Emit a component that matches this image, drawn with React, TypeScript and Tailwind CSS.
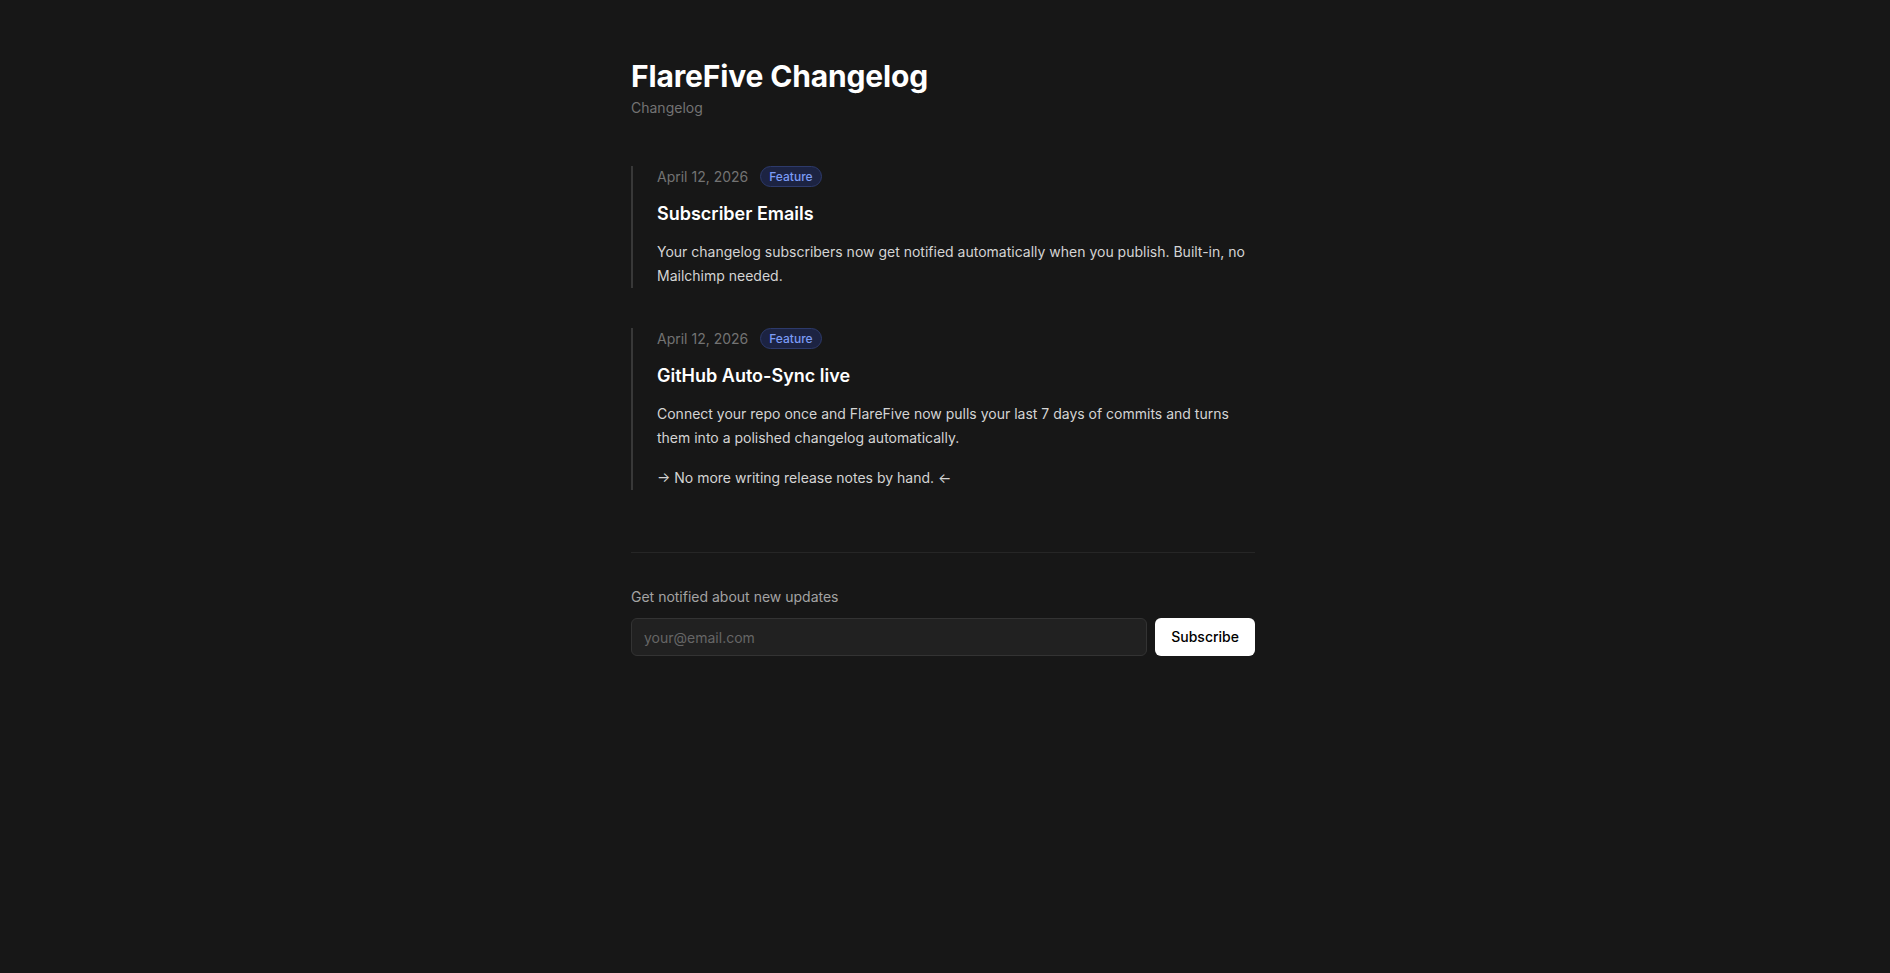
const entries = [
  {
    id: 'subscriber-emails',
    date: 'April 12, 2026',
    tag: 'Feature',
    title: 'Subscriber Emails',
    body: [
      'Your changelog subscribers now get notified automatically when you publish. Built-in, no Mailchimp needed.',
    ],
  },
  {
    id: 'github-auto-sync',
    date: 'April 12, 2026',
    tag: 'Feature',
    title: 'GitHub Auto-Sync live',
    body: [
      'Connect your repo once and FlareFive now pulls your last 7 days of commits and turns them into a polished changelog automatically.',
      '→ No more writing release notes by hand. ←',
    ],
  },
]

export default function App() {
  return (
    <div className="min-h-screen bg-[#171717] font-['Inter',sans-serif] text-white antialiased">
      <main className="mx-auto w-full max-w-[624px] pt-[58px] pb-16 -translate-x-[2px]">
        <header className="mb-[48px]">
          <h1 className="text-3xl font-bold leading-9 tracking-[-0.005em]">FlareFive Changelog</h1>
          <p className="mt-1 text-sm text-[#737373]">Changelog</p>
        </header>

        <div className="flex flex-col gap-10">
          {entries.map((entry) => (
            <article key={entry.id} className="border-l-2 border-[#383838] pl-6">
              <div className="flex items-center gap-3">
                <span className="text-sm text-[#737373]">{entry.date}</span>
                <span className="rounded-full border border-[#2d3a6b] bg-[#1c2342] px-2 py-0.5 text-xs leading-[15px] font-medium text-[#7b9bf5]">
                  {entry.tag}
                </span>
              </div>
              <h2 className="mt-[13px] text-lg font-semibold leading-7">{entry.title}</h2>
              <div className="mt-3 flex flex-col gap-4">
                {entry.body.map((line) => (
                  <p key={line} className="text-sm leading-6 text-[#d4d4d4]">
                    {line}
                  </p>
                ))}
              </div>
            </article>
          ))}
        </div>

        <section className="mt-[62px] border-t border-[#262626] pt-[34px]">
          <p className="mb-[11px] text-sm text-[#a3a3a3]">Get notified about new updates</p>
          <form className="flex gap-2" onSubmit={(e) => e.preventDefault()}>
            <input
              type="email"
              placeholder="your@email.com"
              className="h-[38px] flex-1 rounded-md border border-[#333333] bg-[#212121] px-3 text-sm text-white placeholder:text-[#666666] outline-none"
            />
            <button
              type="submit"
              className="h-[38px] rounded-md bg-white px-4 text-sm font-medium text-black"
            >
              Subscribe
            </button>
          </form>
        </section>
      </main>
    </div>
  )
}
